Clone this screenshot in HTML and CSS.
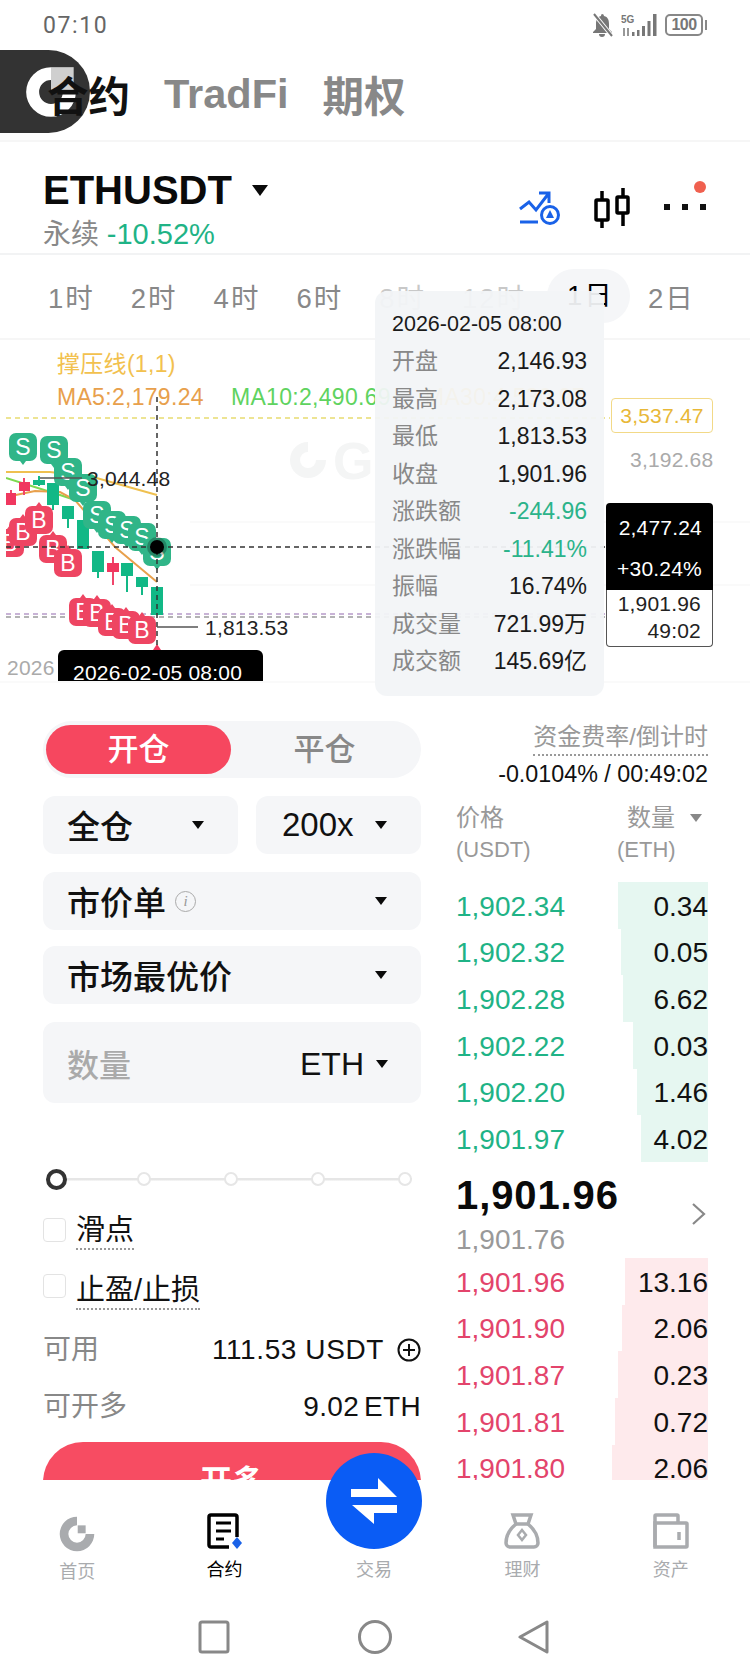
FILE: index.html
```html
<!DOCTYPE html>
<html lang="zh">
<head>
<meta charset="utf-8">
<title>合约</title>
<link rel="stylesheet" href="styles.css">
</head>
<body>
<div class="page">

  <!-- floating app logo -->
  <div class="float_logo">
    <svg width="54" height="54" viewBox="0 0 100 100"><path fill="#fff" d="M50 4A46 46 0 1 0 96 50H72A22 22 0 1 1 50 28Z"/><rect x="50" y="4" width="42" height="42" fill="#cfcfcf"/></svg>
  </div>

  <div class="status">
    <span class="time">07:10</span>
    <div class="status_icons">
      <svg width="23" height="24" viewBox="0 0 23 24"><path fill="#777" d="M11 1a2 2 0 0 1 2 2c4 1 5 4 5 8v5l3 3v1H2v-1l3-3v-5c0-4 1-7 5-8a2 2 0 0 1 1-2zM8 21h6a3 3 0 0 1-6 0z"/><path stroke="#fff" stroke-width="4" d="M3 1l18 22"/><path stroke="#777" stroke-width="2" d="M3 1l18 22"/></svg>
      <svg width="37" height="24" viewBox="0 0 37 24"><text class="sig_text" x="0" y="10">5G</text><path stroke="#777" stroke-width="1.5" d="M3 15v8M7 15v8"/><path fill="#777" d="M11 19h2.500v4H11zM16 17h2.500v6H16zM21 13h3v10h-3zM26.500 8h3v15h-3zM32 1h3.500v22H32z"/></svg>
      <div class="battery"><span class="battery_num">100</span></div>
    </div>
  </div>

  <div class="top_tabs">
    <span class="on">合约</span>
    <span>TradFi</span>
    <span>期权</span>
  </div>

  <div class="symbol">
    <div class="symbol_left">
      <div class="symbol_name">ETHUSDT<i class="caret caret_big"></i></div>
      <div class="symbol_sub">永续 <b>-10.52%</b></div>
    </div>
    <div class="symbol_icons">
      <svg width="41" height="44" viewBox="0 0 41 44" fill="none" stroke="#1a62e8" stroke-width="3"><path d="M1 23l9-7 7 8L30 7M20 7h10v10M1 36h18"/><circle cx="31" cy="29" r="8.500" fill="#fff"/><path fill="#1a62e8" stroke="none" d="M31 24l4 8h-8z"/></svg>
      <svg width="36" height="44" viewBox="0 0 36 44" fill="none" stroke="#000" stroke-width="3.500"><path d="M8 5v9M8 34v8M29 2v9M29 27v13"/><rect x="2" y="14" width="12" height="20" rx="1"/><rect x="23" y="11" width="11" height="16" rx="1"/></svg>
      <svg class="more" width="42" height="44" viewBox="0 0 42 44"><circle cx="36" cy="1" r="6" fill="#f0604f"/><path fill="#111" d="M0 18h6v6H0zM18 18h6v6h-6zM36 18h6v6h-6z"/></svg>
    </div>
  </div>

  <div class="periods">
    <span>1时</span>
    <span>2时</span>
    <span>4时</span>
    <span>6时</span>
    <span class="faded">8时</span>
    <span class="faded">12时</span>
    <span class="active">1日</span>
    <span>2日</span>
  </div>

  <div class="chart">
    <svg class="chart_svg" width="750" height="343" viewBox="0 340 750 343">
      <defs>
        <clipPath id="plot"><rect x="6" y="400" width="600" height="250"/></clipPath>
        <path id="flag_s" d="M-7-14H7a7 7 0 0 1 7 7V7a7 7 0 0 1-7 7H3l-3 4-3-4H-7a7 7 0 0 1-7-7V-7a7 7 0 0 1 7-7z"/>
        <path id="flag_b" d="M-7-14H-3l3-4 3 4H7a7 7 0 0 1 7 7V7a7 7 0 0 1-7 7H-7a7 7 0 0 1-7-7V-7a7 7 0 0 1 7-7z"/>
      </defs>

      <path class="grid" d="M190 522H750M190 585H750"/>
      <g class="mark_logo"><path d="M308 442A18 18 0 1 0 326 460H316A8 8 0 1 1 308 452Z"/><text class="mark_text" x="333" y="479">G</text></g>

      <path class="dash_yellow" d="M6 418H610"/>
      <path class="dash_purple" d="M6 614H610"/>
      <path class="dash_grey" d="M6 617H610"/>

      <g clip-path="url(#plot)">
        <path class="line_yellow" d="M6 472L50 472 93 477 157 495"/>
        <path class="line_green" d="M6 478L60 495 75 500"/>
        <path class="line_orange" d="M6 497L35 491 60 492 75 500 115 547 157 582"/>

        <path class="candle_red" d="M11 490v15M24 478v17M113 557v28"/>
        <path class="candle_green" d="M39 476v10M53 483v27M68 506v22M83 520v29M98 551v27M127 563v29M142 577v18M157 587v28"/>
        <g class="body_red"><rect x="6" y="493" width="10" height="12"/><rect x="19" y="482" width="11" height="9"/><rect x="107" y="563" width="12" height="9"/></g>
        <g class="body_green"><rect x="33" y="480" width="12" height="5"/><rect x="47" y="483" width="12" height="22"/><rect x="62" y="506" width="12" height="13"/><rect x="77" y="520" width="12" height="29"/><rect x="92" y="551" width="12" height="21"/><rect x="121" y="563" width="12" height="13"/><rect x="136" y="577" width="12" height="10"/><rect x="151" y="587" width="12" height="28"/></g>

        <g class="flag_red">
          <g transform="translate(10 543)"><use href="#flag_b"/><text y="8">B</text></g>
          <g transform="translate(23 532)"><use href="#flag_b"/><text y="8">B</text></g>
          <g transform="translate(39 520)"><use href="#flag_b"/><text y="8">B</text></g>
          <g transform="translate(53 549)"><use href="#flag_b"/><text y="8">B</text></g>
          <g transform="translate(68 563)"><use href="#flag_b"/><text y="8">B</text></g>
          <g transform="translate(83 612)"><use href="#flag_b"/><text y="8">B</text></g>
          <g transform="translate(97 613)"><use href="#flag_b"/><text y="8">B</text></g>
          <g transform="translate(112 622)"><use href="#flag_b"/><text y="8">B</text></g>
          <g transform="translate(126 625)"><use href="#flag_b"/><text y="8">B</text></g>
          <g transform="translate(142 630)"><use href="#flag_b"/><text y="8">B</text></g>
        </g>
        <path class="body_red" d="M153 650l4-6 4 6z"/>

        <g class="flag_green">
          <g transform="translate(23 447)"><use href="#flag_s"/><text y="8">S</text></g>
          <g transform="translate(54 450)"><use href="#flag_s"/><text y="8">S</text></g>
          <g transform="translate(68 472)"><use href="#flag_s"/><text y="8">S</text></g>
          <g transform="translate(83 488)"><use href="#flag_s"/><text y="8">S</text></g>
          <g transform="translate(97 515)"><use href="#flag_s"/><text y="8">S</text></g>
          <g transform="translate(112 525)"><use href="#flag_s"/><text y="8">S</text></g>
          <g transform="translate(127 530)"><use href="#flag_s"/><text y="8">S</text></g>
          <g transform="translate(142 537)"><use href="#flag_s"/><text y="8">S</text></g>
          <g transform="translate(157 552)"><use href="#flag_s"/><text y="8">S</text></g>
        </g>
      </g>

      <path class="dash_dark" d="M6 547H610M157 397V648"/>
      <circle cx="157" cy="547" r="10" fill="#000" opacity=".25"/>
      <circle cx="157" cy="547" r="7" fill="#000"/>

      <path class="leader" d="M40 478H82M157 627H198"/>
      <text class="t_axis" x="87" y="486">3,044.48</text>
      <text class="t_axis" x="205" y="635">1,813.53</text>
      <text class="t_axis t_grey" x="7" y="675">2026</text>

      <text class="t_legend t_yellow" x="57" y="372">撑压线(1,1)</text>
      <text class="t_legend t_orange" x="57" y="405">MA5:2,179.24</text>
      <text class="t_legend t_green" x="231" y="405">MA10:2,490.69</text>
      <text class="t_legend t_yellow" x="425" y="405">MA30:4,530.97</text>

      <path fill="#000" d="M64 650H257a6 6 0 0 1 6 6V683H58V656a6 6 0 0 1 6-6z"/>
      <text class="t_axis t_white" x="73" y="680">2026-02-05 08:00</text>
      <path class="grid" d="M0 682H750"/>
    </svg>

    <div class="tag_yellow">3,537.47</div>
    <div class="tag_grey">3,192.68</div>
    <div class="tag_now">
      <div class="tag_black">
        <span>2,477.24</span>
        <span>+30.24%</span>
      </div>
      <div class="tag_white">
        <span>1,901.96</span>
        <span>49:02</span>
      </div>
    </div>

    <div class="tip">
      <div class="tip_date">2026-02-05 08:00</div>
      <div class="tip_row"><span>开盘</span><b>2,146.93</b></div>
      <div class="tip_row"><span>最高</span><b>2,173.08</b></div>
      <div class="tip_row"><span>最低</span><b>1,813.53</b></div>
      <div class="tip_row"><span>收盘</span><b>1,901.96</b></div>
      <div class="tip_row"><span>涨跌额</span><b class="green">-244.96</b></div>
      <div class="tip_row"><span>涨跌幅</span><b class="green">-11.41%</b></div>
      <div class="tip_row"><span>振幅</span><b>16.74%</b></div>
      <div class="tip_row"><span>成交量</span><b>721.99万</b></div>
      <div class="tip_row"><span>成交额</span><b>145.69亿</b></div>
    </div>
  </div>

  <div class="trade">
    <div class="form">
      <div class="switch">
        <div class="switch_on">开仓</div>
        <div class="switch_off">平仓</div>
      </div>
      <div class="select_row">
        <div class="select select_a">全仓<i class="caret"></i></div>
        <div class="select select_b">200x<i class="caret"></i></div>
      </div>
      <div class="select select_wide">
        <span class="select_label">市价单<em class="info">i</em></span><i class="caret"></i>
      </div>
      <div class="select select_wide">市场最优价<i class="caret"></i></div>
      <div class="amount">
        <span class="amount_hint">数量</span>
        <span class="amount_unit">ETH<i class="caret"></i></span>
      </div>

      <div class="slider">
        <i class="knob"></i>
        <i class="stop"></i>
        <i class="stop"></i>
        <i class="stop"></i>
        <i class="stop"></i>
      </div>

      <div class="check"><i class="box"></i><span>滑点</span></div>
      <div class="check check_two"><i class="box"></i><span>止盈/止损</span></div>

      <div class="info_row">
        <span>可用</span>
        <b>111.53 USDT
          <svg width="24" height="24" viewBox="0 0 24 24" fill="none" stroke="#111" stroke-width="2"><circle cx="12" cy="12" r="10.500"/><path d="M12 6v12M6 12h12"/></svg>
        </b>
      </div>
      <div class="info_row info_row2">
        <span>可开多</span>
        <b>9.02 ETH</b>
      </div>

      <div class="open_btn">开多</div>
    </div>

    <div class="book">
      <div class="funding">
        <span class="funding_label">资金费率/倒计时</span>
        <div class="funding_val">-0.0104% / 00:49:02</div>
      </div>
      <div class="book_head">
        <div><div>价格</div><div class="unit">(USDT)</div></div>
        <div class="book_head_r"><div>数量<i class="caret caret_grey"></i></div><div class="unit">(ETH)</div></div>
      </div>

      <div class="row ask"><i class="bar" style="width:90px"></i><span>1,902.34</span><b>0.34</b></div>
      <div class="row ask"><i class="bar" style="width:87px"></i><span>1,902.32</span><b>0.05</b></div>
      <div class="row ask"><i class="bar" style="width:85px"></i><span>1,902.28</span><b>6.62</b></div>
      <div class="row ask"><i class="bar" style="width:75px"></i><span>1,902.22</span><b>0.03</b></div>
      <div class="row ask"><i class="bar" style="width:71px"></i><span>1,902.20</span><b>1.46</b></div>
      <div class="row ask"><i class="bar" style="width:67px"></i><span>1,901.97</span><b>4.02</b></div>

      <div class="mid">
        <div>
          <div class="mid_price">1,901.96</div>
          <div class="mid_mark">1,901.76</div>
        </div>
        <svg width="15" height="24" viewBox="0 0 15 24" fill="none" stroke="#888" stroke-width="2.200"><path d="M2 2l11 10L2 22"/></svg>
      </div>

      <div class="row bid"><i class="bar" style="width:83px"></i><span>1,901.96</span><b>13.16</b></div>
      <div class="row bid"><i class="bar" style="width:86px"></i><span>1,901.90</span><b>2.06</b></div>
      <div class="row bid"><i class="bar" style="width:90px"></i><span>1,901.87</span><b>0.23</b></div>
      <div class="row bid"><i class="bar" style="width:93px"></i><span>1,901.81</span><b>0.72</b></div>
      <div class="row bid"><i class="bar" style="width:96px"></i><span>1,901.80</span><b>2.06</b></div>
    </div>
  </div>

  <div class="tabbar">
    <div class="tab_item tab_home">
      <svg width="36" height="36" viewBox="0 0 100 100"><path fill="#a9abae" d="M50 2A48 48 0 1 0 98 50H74A24 24 0 1 1 50 26Z"/><rect x="52" y="26" width="22" height="22" fill="#a9abae"/></svg>
      <span>首页</span>
    </div>
    <div class="tab_item on">
      <svg width="36" height="36" viewBox="0 0 36 36" fill="none"><path stroke="#000" stroke-width="3.500" d="M22 34H4a2 2 0 0 1-2-2V4a2 2 0 0 1 2-2h24a2 2 0 0 1 2 2v20"/><path stroke="#000" stroke-width="3" d="M9 10h15M9 18h15M9 26h8"/><path fill="#1a62e8" d="M30 24l5 6-5 6-5-6z"/></svg>
      <span>合约</span>
    </div>
    <div class="tab_item">
      <i class="tab_space"></i>
      <span>交易</span>
    </div>
    <div class="tab_item">
      <svg width="36" height="36" viewBox="0 0 36 36" fill="none" stroke="#a9abae" stroke-width="3.500"><path d="M9 2h18l-3 9H12z"/><path d="M12 11C6 16 2 22 2 30a4 4 0 0 0 4 4h24a4 4 0 0 0 4-4c0-8-4-14-10-19"/><path stroke-width="2.500" d="M18 17l4 5-4 5-4-5z"/></svg>
      <span>理财</span>
    </div>
    <div class="tab_item">
      <svg width="36" height="36" viewBox="0 0 36 36" fill="none" stroke="#a9abae" stroke-width="3.500"><path d="M2 34V3a1 1 0 0 1 1-1h21a1 1 0 0 1 1 1v7"/><path d="M2 10h31a1 1 0 0 1 1 1v22a1 1 0 0 1-1 1H2z"/><path d="M26 19v8"/></svg>
      <span>资产</span>
    </div>
    <div class="fab">
      <svg width="46" height="46" viewBox="0 0 46 46"><path fill="#fff" d="M27 0l19 19H0v-8h27zM1 27h45v8H23v11z"/></svg>
    </div>
  </div>

  <div class="sysnav">
    <svg class="sys_square" width="34" height="34" viewBox="0 0 34 34" fill="none" stroke="#888" stroke-width="3"><rect x="3" y="2" width="28" height="30" rx="2"/></svg>
    <svg width="34" height="34" viewBox="0 0 34 34" fill="none" stroke="#888" stroke-width="3"><circle cx="17" cy="17" r="15.500"/></svg>
    <svg width="34" height="34" viewBox="0 0 34 34" fill="none" stroke="#888" stroke-width="3" stroke-linejoin="round"><path d="M30 2v30L3 17z"/></svg>
  </div>
</div>
</body>
</html>
```

FILE: styles.css
```css
*{
	margin:0;
	padding:0;
	box-sizing:border-box;
	}
body{
	background:#fff;
	font-family:"Liberation Sans","Noto Sans CJK SC",sans-serif;
	color:#111;
	}
i,em{
	font-style:normal;
	}
.page{
	width:750px;
	height:1680px;
	overflow:hidden;
	position:relative;
	}
.green{
	color:#2bb38a !important;
	}

/* floating logo */
.float_logo{
	position:absolute;
	left:0;
	top:50px;
	width:90px;
	height:83px;
	background:#333;
	border-radius:0 42px 42px 0;
	display:flex;
	align-items:center;
	padding-left:24px;
	}

/* status bar */
.status{
	height:50px;
	padding:0 47px 0 43px;
	display:flex;
	justify-content:space-between;
	align-items:center;
	}
.time{
	font-family:Roboto,"Liberation Sans",sans-serif;
	font-size:23px;
	letter-spacing:1.6px;
	color:#666;
	}
.status_icons{
	display:flex;
	align-items:center;
	gap:7px;
	}
.sig_text{
	font-size:10px;
	font-weight:bold;
	fill:#777;
	}
.battery{
	width:38px;
	height:22px;
	border:2.5px solid #888;
	border-radius:5px;
	display:flex;
	align-items:center;
	justify-content:center;
	position:relative;
	}
.battery:after{
	content:"";
	position:absolute;
	right:-6px;
	top:4px;
	width:2px;
	height:10px;
	background:#888;
	}
.battery_num{
	font-size:16px;
	font-weight:bold;
	letter-spacing:-.5px;
	color:#777;
	}

/* title tabs */
.top_tabs{
	height:92px;
	padding:0 0 2px 47px;
	display:flex;
	gap:34px;
	align-items:center;
	font-size:41.5px;
	font-weight:bold;
	color:#888;
	border-bottom:2px solid #f6f6f6;
	position:relative;
	}
.top_tabs .on{
	color:#111;
	}

/* symbol row */
.symbol{
	height:113px;
	padding:0 44px 0 43px;
	display:flex;
	justify-content:space-between;
	border-bottom:2px solid #f2f3f4;
	}
.symbol_name{
	margin-top:25px;
	height:46px;
	line-height:46px;
	font-size:40px;
	font-weight:bold;
	color:#0a0a0a;
	display:flex;
	align-items:center;
	}
.symbol_sub{
	margin-top:4px;
	font-size:28px;
	line-height:34px;
	color:#888;
	}
.symbol_sub b{
	font-size:29px;
	font-weight:normal;
	color:#1fb386;
	}
.symbol_icons{
	padding-top:44px;
	display:flex;
	gap:34px;
	}
.more{
	overflow:visible;
	}
.caret{
	display:inline-block;
	width:0;
	height:0;
	border-left:6px solid transparent;
	border-right:6px solid transparent;
	border-top:8px solid #0a0a0a;
	}
.caret_big{
	margin:0 0 0 20px;
	border-left-width:8px;
	border-right-width:8px;
	border-top-width:11px;
	}
.caret_grey{
	margin-left:15px;
	border-top-color:#888;
	vertical-align:4px;
	}

/* periods */
.periods{
	height:85px;
	padding:0 0 2px 48px;
	display:flex;
	align-items:center;
	gap:36px;
	font-size:27.5px;
	letter-spacing:2px;
	color:#888;
	border-bottom:2px solid #f6f6f6;
	}
.periods .faded{
	color:#c8c8c8;
	}
.periods .active{
	margin:0 -18px 0 -15px;
	padding:0 16px 0 20px;
	height:54px;
	line-height:54px;
	border-radius:27px;
	background:#f5f6f8;
	color:#000;
	}

/* chart */
.chart{
	height:343px;
	position:relative;
	}
.chart_svg{
	display:block;
	}
.chart_svg text{
	font-family:"Liberation Sans","Noto Sans CJK SC",sans-serif;
	}
.grid{
	stroke:#fafafa;
	stroke-width:2;
	fill:none;
	}
.mark_logo{
	fill:#f4f5f5;
	}
.mark_text{
	font-size:52px;
	font-weight:bold;
	}
.dash_yellow{
	stroke:#e8dc70;
	stroke-width:1.5;
	stroke-dasharray:5 4;
	}
.dash_purple{
	stroke:#b79bc9;
	stroke-width:1.5;
	stroke-dasharray:5 4;
	}
.dash_grey{
	stroke:#9a9a9a;
	stroke-width:1.5;
	stroke-dasharray:5 4;
	}
.dash_dark{
	stroke:#333;
	stroke-width:1.5;
	stroke-dasharray:5 4;
	fill:none;
	}
.line_yellow,.line_green,.line_orange{
	fill:none;
	stroke-width:2;
	}
.line_yellow{
	stroke:#efc050;
	}
.line_green{
	stroke:#7ed84f;
	}
.line_orange{
	stroke:#e8a04c;
	}
.candle_red,.candle_green{
	stroke-width:2;
	fill:none;
	}
.candle_red{
	stroke:#f0456b;
	}
.candle_green{
	stroke:#12b886;
	}
.body_red{
	fill:#f0375f;
	}
.body_green{
	fill:#12b886;
	}
.flag_red{
	fill:#ee4562;
	}
.flag_green{
	fill:#30b588;
	}
.flag_red text,.flag_green text{
	fill:#fff;
	font-size:23px;
	text-anchor:middle;
	}
.leader{
	stroke:#555;
	stroke-width:1.5;
	fill:none;
	}
.t_axis{
	font-size:21px;
	letter-spacing:.2px;
	fill:#222;
	}
.t_grey{
	fill:#aaa;
	}
.t_white{
	fill:#fff;
	}
.t_legend{
	font-size:23px;
	letter-spacing:.3px;
	}
.t_yellow{
	fill:#f2c14e;
	}
.t_orange{
	fill:#e8a04c;
	}
.t_green{
	fill:#5fd35f;
	}

/* price tags on the axis */
.tag_yellow{
	position:absolute;
	left:611px;
	top:58px;
	width:102px;
	height:35px;
	line-height:33px;
	text-align:center;
	font-size:21px;
	letter-spacing:.2px;
	color:#e8b838;
	background:#fff;
	border:1.5px solid #f2d987;
	border-radius:4px;
	}
.tag_grey{
	position:absolute;
	left:630px;
	top:108px;
	font-size:21px;
	letter-spacing:.2px;
	line-height:24px;
	color:#aaa;
	}
.tag_now{
	position:absolute;
	left:606px;
	top:163px;
	width:107px;
	font-size:21px;
	letter-spacing:.2px;
	text-align:right;
	}
.tag_now span{
	display:block;
	}
.tag_black{
	height:87px;
	padding:11px 11px 0 0;
	background:#000;
	color:#fff;
	border-radius:4px 4px 0 0;
	line-height:28px;
	}
.tag_black span + span{
	margin-top:13px;
	}
.tag_white{
	height:57px;
	padding:0 11px 0 0;
	background:#fff;
	border:1.5px solid #555;
	border-top:0;
	border-radius:0 0 4px 4px;
	line-height:27px;
	color:#222;
	}

/* tooltip */
.tip{
	position:absolute;
	left:375px;
	top:-49px;
	width:229px;
	height:405px;
	padding:15px 17px 0 17px;
	background:rgba(242,244,247,.94);
	border-radius:12px;
	font-size:23px;
	}
.tip_date{
	height:37px;
	line-height:37px;
	font-size:21.5px;
	color:#1a1a1a;
	white-space:nowrap;
	}
.tip_row{
	height:37.500px;
	line-height:37.500px;
	display:flex;
	justify-content:space-between;
	}
.tip_row span{
	color:#888;
	}
.tip_row b{
	font-weight:normal;
	color:#1a1a1a;
	}

/* trade area */
.trade{
	height:797px;
	overflow:hidden;
	padding:0 42px 0 43px;
	display:flex;
	gap:35px;
	}
.form{
	width:378px;
	flex:none;
	}
.switch{
	margin-top:38px;
	height:57px;
	padding:4px 3px;
	display:flex;
	background:#f5f6f8;
	border-radius:29px;
	font-size:31px;
	font-weight:500;
	text-align:center;
	}
.switch_on{
	width:185px;
	line-height:50px;
	background:#f6475f;
	color:#fff;
	border-radius:25px;
	}
.switch_off{
	flex:1;
	line-height:50px;
	color:#888;
	}
.select_row{
	margin-top:18px;
	display:flex;
	gap:18px;
	}
.select{
	height:58px;
	padding:0 34px 0 24px;
	background:#f5f6f8;
	border-radius:12px;
	display:flex;
	align-items:center;
	justify-content:space-between;
	font-size:33px;
	font-weight:500;
	color:#111;
	}
.select_a{
	width:195px;
	}
.select_b{
	flex:1;
	padding-left:26px;
	}
.select_wide{
	margin-top:16px;
	}
.select_row + .select_wide{
	margin-top:18px;
	}
.select_label{
	display:flex;
	align-items:center;
	}
.info{
	margin-left:9px;
	width:21px;
	height:21px;
	border:1.5px solid #aaa;
	border-radius:50%;
	font-size:15px;
	font-weight:normal;
	font-style:italic;
	line-height:18px;
	text-align:center;
	color:#999;
	font-family:"Liberation Serif",serif;
	}
.amount{
	margin-top:18px;
	height:81px;
	padding:0 33px 0 24px;
	background:#f5f6f8;
	border-radius:12px;
	display:flex;
	align-items:center;
	justify-content:space-between;
	font-size:32px;
	}
.amount_hint{
	color:#aaa;
	font-weight:500;
	}
.amount_unit{
	padding-top:3px;
	display:flex;
	align-items:center;
	gap:12px;
	}
.slider{
	margin-top:64px;
	height:24px;
	padding:0 9px 0 3px;
	display:flex;
	align-items:center;
	justify-content:space-between;
	background:linear-gradient(#e6e6e6,#e6e6e6) center/100% 2.500px no-repeat;
	background-origin:content-box;
	}
.knob{
	width:21px;
	height:21px;
	margin-right:-3px;
	border:4px solid #333;
	border-radius:50%;
	background:#fff;
	}
.stop{
	width:14px;
	height:14px;
	border:2px solid #e6e6e6;
	border-radius:50%;
	background:#fff;
	}
.check{
	margin-top:20px;
	height:60px;
	padding-top:1px;
	display:flex;
	align-items:flex-start;
	gap:10px;
	font-size:29px;
	}
.check_two{
	margin-top:0;
	}
.check span{
	height:38px;
	line-height:36px;
	border-bottom:2px dotted #999;
	}
.box{
	margin-top:6px;
	width:23px;
	height:24px;
	border:1.5px solid #e3e3e3;
	border-radius:4px;
	}
.check_two .box{
	margin-top:2px;
	}
.info_row{
	height:38px;
	line-height:38px;
	display:flex;
	justify-content:space-between;
	align-items:center;
	font-size:28px;
	}
.info_row2{
	margin-top:19px;
	}
.info_row span{
	color:#888;
	}
.info_row b{
	font-weight:normal;
	display:flex;
	align-items:center;
	gap:13px;
	letter-spacing:.6px;
	color:#111;
	}
.info_row2 b{
	letter-spacing:.3px;
	word-spacing:-3px;
	}
.open_btn{
	margin-top:16px;
	height:80px;
	line-height:80px;
	text-align:center;
	background:#f74c62;
	color:#fff;
	font-size:32px;
	font-weight:bold;
	border-radius:40px;
	}

/* order book */
.book{
	flex:1;
	min-width:0;
	}
.funding{
	margin-top:37px;
	text-align:right;
	}
.funding_label{
	display:inline-block;
	height:36px;
	line-height:34px;
	font-size:24px;
	color:#999;
	border-bottom:2px dotted #999;
	}
.funding_val{
	height:36px;
	line-height:36px;
	font-size:23.3px;
	white-space:nowrap;
	}
.book_head{
	margin-top:10px;
	height:64px;
	display:flex;
	justify-content:space-between;
	font-size:24px;
	line-height:32px;
	color:#999;
	}
.book_head_r{
	width:91px;
	text-align:left;
	padding-left:10px;
	}
.book_head_r .unit{
	margin-left:-10px;
	}
.unit{
	font-size:22px;
	}
.row{
	height:46.670px;
	padding-top:3px;
	display:flex;
	justify-content:space-between;
	align-items:center;
	font-size:28px;
	position:relative;
	}
.book_head + .row{
	margin-top:16px;
	}
.row span,.row b{
	position:relative;
	font-weight:normal;
	}
.bar{
	position:absolute;
	right:0;
	top:0;
	bottom:0;
	}
.ask span{
	color:#1fb386;
	}
.ask .bar{
	background:#e6f7f1;
	}
.bid span{
	color:#e3446b;
	}
.bid .bar{
	background:#feeaec;
	}
.mid{
	margin-top:8px;
	height:88px;
	padding-right:2px;
	display:flex;
	justify-content:space-between;
	align-items:center;
	}
.mid_price{
	height:50px;
	line-height:50px;
	font-size:40px;
	font-weight:bold;
	letter-spacing:.9px;
	color:#0a0a0a;
	}
.mid_mark{
	height:38px;
	line-height:38px;
	padding-top:1px;
	font-size:28px;
	color:#999;
	}

/* bottom tabs */
.tabbar{
	height:120px;
	padding:33px 5px 0 3px;
	display:flex;
	background:#fff;
	position:relative;
	}
.tab_item{
	flex:1;
	display:flex;
	flex-direction:column;
	align-items:center;
	font-size:18px;
	color:#a9abae;
	}
.tab_item.on{
	color:#000;
	margin-left:-1px;
	margin-right:1px;
	}
.tab_item span{
	margin-top:9px;
	line-height:24px;
	}
.tab_home svg{
	margin-top:3px;
	}
.tab_home span{
	margin-top:8px;
	}
.tab_space{
	height:36px;
	}
.fab{
	position:absolute;
	left:326px;
	top:-27px;
	width:96px;
	height:96px;
	border-radius:50%;
	background:#0a5cf5;
	display:flex;
	align-items:center;
	justify-content:center;
	}

/* system nav */
.sysnav{
	height:80px;
	padding:20px 0 0 0;
	display:flex;
	justify-content:center;
	gap:125px;
	}
.sys_square{
	margin-left:-2px;
	margin-right:2px;
	}
```
